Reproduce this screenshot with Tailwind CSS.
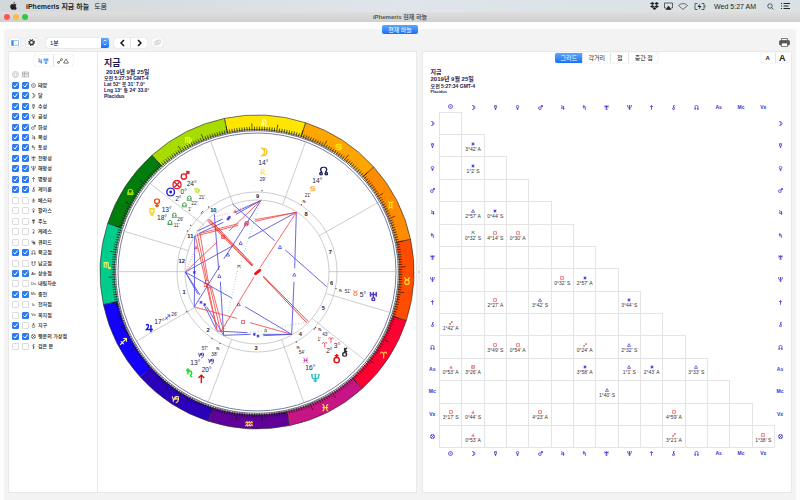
<!DOCTYPE html>
<html lang="ko">
<head>
    <meta charset="UTF-8">
    <meta name="viewport" content="width=device-width, initial-scale=1.0">
    <title>iPhemeris 현재 하늘</title>
    <script src="https://cdn.jsdelivr.net/npm/@tailwindcss/browser@4"></script>
</head>
<body class="flex min-h-screen flex-col bg-[#fdfdfd] font-['Liberation_Sans','Noto_Sans_CJK_KR',sans-serif] text-[6px] leading-none text-[#222]">

    <!-- Shared symbols, all drawn on a 20x20 box -->
    <svg class="hidden" aria-hidden="true">
        <defs>
            <symbol id="sun" viewBox="0 0 20 20"><circle cx="10" cy="10" r="8"/><circle cx="10" cy="10" r="1.5"/></symbol>
            <symbol id="moon" viewBox="0 0 20 20"><path d="M6 2c13 0 13 16 0 16 7-5 7-11 0-16z"/></symbol>
            <symbol id="mercury" viewBox="0 0 20 20"><circle cx="10" cy="8" r="4.5"/><path d="M5 1c1 3 9 3 10 0M10 12.500v7M6.500 16h7"/></symbol>
            <symbol id="venus" viewBox="0 0 20 20"><circle cx="10" cy="6.500" r="5"/><path d="M10 11.500v8M6 15.500h8"/></symbol>
            <symbol id="mars" viewBox="0 0 20 20"><circle cx="7.500" cy="12.500" r="5.500"/><path d="M11.500 8.500L18 2M12 2h6v6"/></symbol>
            <symbol id="jupiter" viewBox="0 0 20 20"><path d="M4 4c5-4 8 2 1 9h13M14 4v15"/></symbol>
            <symbol id="saturn" viewBox="0 0 20 20"><path d="M7 1v13M3 5h8M7 9c8-5 10 2 6 6-1 2 0 4 3 3"/></symbol>
            <symbol id="uranus" viewBox="0 0 20 20"><path d="M4 1v10M16 1v10M4 6h12M10 1v12"/><circle cx="10" cy="16" r="3"/></symbol>
            <symbol id="neptune" viewBox="0 0 20 20"><path d="M3 2v4c0 8 14 8 14 0V2M10 1v18M6 16h8M1 3h4M8 3h4M15 3h4"/></symbol>
            <symbol id="pluto" viewBox="0 0 20 20"><path d="M10 19V2M4 8l6-6 6 6"/></symbol>
            <symbol id="chiron" viewBox="0 0 20 20"><circle cx="10" cy="15" r="4"/><path d="M10 11V1M15 1l-5 5 5 4"/></symbol>
            <symbol id="node" viewBox="0 0 20 20"><path d="M6 13C1 5 5 2 10 2s9 3 4 11"/><circle cx="4.500" cy="15.500" r="2.500"/><circle cx="15.500" cy="15.500" r="2.500"/></symbol>
            <symbol id="snode" viewBox="0 0 20 20"><path d="M6 7c-5 8-1 11 4 11s9-3 4-11"/><circle cx="4.500" cy="4.500" r="2.500"/><circle cx="15.500" cy="4.500" r="2.500"/></symbol>
            <symbol id="earth" viewBox="0 0 20 20"><circle cx="10" cy="13" r="5.500"/><path d="M10 7.500V0M6 4h8"/></symbol>
            <symbol id="fortune" viewBox="0 0 20 20"><circle cx="10" cy="10" r="8.500"/><path d="M4 4l12 12M16 4L4 16"/></symbol>
            <symbol id="vesta" viewBox="0 0 20 20"><path d="M10 2v10M6 7h8M3 12h14M6 17h8"/></symbol>
            <symbol id="pallas" viewBox="0 0 20 20"><path d="M10 1l5 5-5 6-5-6zM10 12v7M6 15h8"/></symbol>
            <symbol id="juno" viewBox="0 0 20 20"><path d="M10 1v18M5 3l10 6M15 3L5 9M4 6h12M6 15h8"/></symbol>
            <symbol id="ceres" viewBox="0 0 20 20"><path d="M6 3c9-4 11 7 4 8v8M6 15h8"/></symbol>
            <symbol id="cupid" viewBox="0 0 20 20"><path d="M4 2v8h12M9 2v16M15 5v14M9 14h8"/></symbol>
            <symbol id="lilith" viewBox="0 0 20 20"><path d="M13 1C5 1 5 12 13 12 9 9 9 4 13 1zM10 12v8M7 16h7"/></symbol>

            <symbol id="aries" viewBox="0 0 20 20"><path d="M10 19V9C10 1 2 1 3 7M10 9c0-8 8-8 7-2"/></symbol>
            <symbol id="taurus" viewBox="0 0 20 20"><circle cx="10" cy="13" r="5.500"/><path d="M3 1c2 0 2 6 7 6s5-6 7-6"/></symbol>
            <symbol id="gemini" viewBox="0 0 20 20"><path d="M3 2c4 2 10 2 14 0M3 18c4-2 10-2 14 0M7 3v14M13 3v14"/></symbol>
            <symbol id="cancer" viewBox="0 0 20 20"><circle cx="6" cy="8" r="3"/><circle cx="14" cy="12" r="3"/><path d="M3 7c2-4 10-5 15-2M17 13c-2 4-10 5-15 2"/></symbol>
            <symbol id="leo" viewBox="0 0 20 20"><circle cx="5" cy="13" r="3"/><path d="M7 11C2 2 8 1 10 2c7 2 1 10 2 14 1 3 4 3 6 1"/></symbol>
            <symbol id="virgo" viewBox="0 0 20 20"><path d="M1 3c2-1 2 1 2 2v11M3 5c3-4 5-2 5 0v11M8 5c3-4 5-2 5 0v9c0 3 2 5 4 5M13 8c6-5 7 5-3 9"/></symbol>
            <symbol id="libra" viewBox="0 0 20 20"><path d="M2 17h16M2 13h5c-5-4-2-9 3-9s8 5 3 9h5"/></symbol>
            <symbol id="scorpio" viewBox="0 0 20 20"><path d="M1 3c2-1 2 1 2 2v11M3 5c3-4 5-2 5 0v11M8 5c3-4 5-2 5 0v10c0 3 2 3 5 2M16 14l3 3-3 3"/></symbol>
            <symbol id="sagittarius" viewBox="0 0 20 20"><path d="M2 18L18 2M10 2h8v8M4 9l7 7"/></symbol>
            <symbol id="capricorn" viewBox="0 0 20 20"><path d="M1 3c3 0 3 4 4 11L10 3v8"/><circle cx="14.500" cy="6" r="3.500"/><path d="M18 6c0 7-2 12-7 12"/></symbol>
            <symbol id="aquarius" viewBox="0 0 20 20"><path d="M1 9l4-4 2 4 4-4 2 4 4-4 2 4M1 16l4-4 2 4 4-4 2 4 4-4 2 4"/></symbol>
            <symbol id="pisces" viewBox="0 0 20 20"><path d="M3 1c6 5 6 13 0 18M17 1c-6 5-6 13 0 18M3 10h14"/></symbol>

            <symbol id="square" viewBox="0 0 20 20"><path d="M3 3h14v14H3z"/></symbol>
            <symbol id="trine" viewBox="0 0 20 20"><path d="M10 3l8 14H2z"/></symbol>
            <symbol id="sextile" viewBox="0 0 20 20"><path stroke-width="4" d="M10 2v16M3 6l14 8M17 6L3 14"/></symbol>
            <symbol id="opposition" viewBox="0 0 20 20"><circle cx="5" cy="15" r="3"/><circle cx="15" cy="5" r="3"/><path d="M7 13l6-6"/></symbol>
            <symbol id="semisquare" viewBox="0 0 20 20"><path d="M13 3L4 16h13M10 8c3 1 4 4 3 8"/></symbol>
            <symbol id="sesqui" viewBox="0 0 20 20"><path d="M3 3h14v14H3zM10 7v6M7 10h6"/></symbol>
            <symbol id="semisextile" viewBox="0 0 20 20"><path d="M2 4h16M2 17l8-13 8 13"/></symbol>
            <symbol id="quincunx" viewBox="0 0 20 20"><path d="M3 18h4V10c-3-9 9-9 6 0v8h4"/></symbol>
        </defs>
    </svg>

    <!-- System menu bar -->
    <header class="flex h-3 items-center bg-linear-to-r from-[#d3d8da] via-[#dfe5ea] to-[#d8e1e4] pr-[10px] pl-[10px] text-[7px]">
        <svg class="h-[8px] w-[7px]" viewBox="0 0 14 17" fill="#222"><path d="M10 0c0 2-1 4-3 4 0-2 1-4 3-4zM7 5c1 0 2-1 3.500-1 1 0 2.500.5 3 1.500-3 2-2 6 .5 7-.8 2-2 4-3.500 4-1 0-1.500-.6-3-.6s-2 .6-3 .6C2.500 16.500 0 13 0 9.500 0 6 2 4 4 4c1.300 0 2 1 3 1z"/></svg>
        <nav class="ml-[9px] flex gap-[5px]">
            <a href="#" class="font-bold">iPhemeris 지금 하늘</a>
            <a href="#">도움</a>
        </nav>
        <div class="ml-auto flex items-center">
            <svg class="h-[8px] w-[9px]" viewBox="0 0 18 16" fill="#222"><path d="M5 0l4 3-4 3-5-3zM13 0l5 3-5 3-4-3zM5 6l4 3-4 3-5-3zM13 6l5 3-5 3-4-3zM9 10l4 3-4 3-4-3z"/></svg>
            <svg class="ml-[5px] h-[8px] w-[9px]" viewBox="0 0 18 16" fill="none" stroke="#333" stroke-width="1.500"><path d="M4 12H1V2h16v10h-3"/><path d="M9 8l5 7H4z" fill="#222"/></svg>
            <svg class="ml-[5px] h-[7px] w-[10px]" viewBox="0 0 20 14" fill="none" stroke="#444" stroke-width="1.500"><path d="M1 5c5-5 13-5 18 0l-9 8z"/></svg>
            <svg class="ml-[6px] h-[7px] w-[12px]" viewBox="0 0 24 14" fill="none" stroke="#333" stroke-width="1.500"><path d="M7 1H2v12h5M15 1h5v12h-5M22 5v4"/><path d="M12 1L7 8h4l-1 5 5-7h-4z" fill="#222" stroke="none"/></svg>
            <time class="ml-[8px]">Wed 5:27 AM</time>
            <svg class="ml-[11px] h-[7px] w-[7px]" viewBox="0 0 14 14" fill="none" stroke="#333" stroke-width="1.500"><circle cx="6" cy="6" r="4.500"/><path d="M9 9l4 4"/></svg>
            <svg class="ml-[7px] h-[6px] w-[9px]" viewBox="0 0 18 12" stroke="#222" stroke-width="2"><path d="M0 1h2M5 1h13M0 6h2M5 6h10M0 11h2M5 11h13"/></svg>
        </div>
    </header>

    <!-- Title bar -->
    <div class="grid h-[10px] grid-cols-3 items-center bg-linear-to-b from-[#dedede] to-[#cfcfcf] px-1">
        <div class="flex gap-[3px]">
            <span class="size-[6px] rounded-full bg-[#fc5753]"></span>
            <span class="size-[6px] rounded-full bg-[#fdbc40]"></span>
            <span class="size-[6px] rounded-full bg-[#33c748]"></span>
        </div>
        <h1 class="text-center text-[6px] font-bold text-[#555]">iPhemeris 현재 하늘</h1>
    </div>

    <main class="mx-1 mt-[7px] flex grow flex-col rounded-t-[3px] bg-[#f3f3f3] px-[4px] pb-[7px]">
        <button class="z-10 -mt-1 flex h-[9px] w-[36px] items-center justify-center self-center rounded-[2px] bg-linear-to-b from-[#5da7fa] to-[#1a6dfb] text-[6px] text-white">현재 하늘</button>

        <!-- Toolbar -->
        <div class="flex h-[17px] items-center py-[3px] pr-[2px] pl-[1px]">
            <button class="flex h-[9px] w-[11px] items-center justify-center rounded-[2px] bg-white shadow-[0_0_1px_#aaa]" aria-label="사이드바">
                <svg class="h-[6px] w-[8px]" viewBox="0 0 16 12" fill="none" stroke="#7db4f3" stroke-width="1.500"><path d="M1 1h14v10H1z"/><path d="M1 1h4v10H1z" fill="#2f86f6"/></svg>
            </button>
            <button class="ml-[6px] flex h-[9px] w-[11px] items-center justify-center rounded-[2px] bg-white shadow-[0_0_1px_#aaa]" aria-label="설정">
                <svg class="size-[7px]" viewBox="0 0 20 20" fill="none" stroke="#333"><circle cx="10" cy="10" r="5.500" stroke-width="3.500"/><circle cx="10" cy="10" r="8.500" stroke-width="3" stroke-dasharray="3.340 3.340"/></svg>
            </button>
            <div class="relative ml-[9px] h-[10px] w-[63px]">
                <select aria-label="간격" class="block size-full appearance-none rounded-[2px] bg-white pl-[4px] text-[6px] shadow-[0_0_1px_#999]"><option>1분</option></select>
                <span class="pointer-events-none absolute inset-y-0 right-0 flex w-[8px] items-center justify-center rounded-r-[2px] bg-linear-to-b from-[#61a9fa] to-[#1a6dfb]">
                    <svg class="h-[7px] w-[4px]" viewBox="0 0 8 14" fill="none" stroke="#fff" stroke-width="1.500"><path d="M1 5l3-3 3 3M1 9l3 3 3-3"/></svg>
                </span>
            </div>
            <div class="ml-[5px] flex h-[10px] w-[33px] divide-x divide-[#e2e2e2] rounded-[2px] bg-white shadow-[0_0_1px_#aaa]">
                <button class="flex flex-1 items-center justify-center" aria-label="이전"><svg class="h-[8px] w-[5px]" viewBox="0 0 10 16" fill="none" stroke="#111" stroke-width="3"><path d="M8 2L2 8l6 6"/></svg></button>
                <button class="flex flex-1 items-center justify-center" aria-label="다음"><svg class="h-[8px] w-[5px]" viewBox="0 0 10 16" fill="none" stroke="#111" stroke-width="3"><path d="M2 2l6 6-6 6"/></svg></button>
            </div>
            <button class="ml-[5px] flex h-[9px] w-[11px] items-center justify-center rounded-[2px] bg-[#fafafa] shadow-[0_0_1px_#ccc]" aria-label="연결" disabled>
                <svg class="size-[7px]" viewBox="0 0 20 20" fill="none" stroke="#bbb" stroke-width="2"><rect x="1" y="7" width="13" height="9" rx="4.500" transform="rotate(-45 7 12)"/><rect x="6" y="4" width="13" height="9" rx="4.500" transform="rotate(-45 13 8)"/></svg>
            </button>
            <button class="ml-auto" aria-label="인쇄">
                <svg class="h-[9px] w-[11px]" viewBox="0 0 22 18" fill="none" stroke="#555" stroke-width="1.500"><path d="M5 5V1h12v4"/><rect x="1" y="5" width="20" height="9" rx="2" fill="#555"/><path d="M5 10h12v7H5z" fill="#fff"/></svg>
            </button>
        </div>

        <div class="flex grow">
            <!-- Object list -->
            <aside class="w-[90px] shrink-0 border border-[#e9e9e9] bg-white pt-[3px]">
                <div class="mx-auto flex h-[11px] w-[39px] divide-x divide-[#e2e2e2] rounded-[2px] text-[#222] shadow-[0_0_1px_#aaa]">
                    <button class="flex flex-1 items-center justify-center text-[#2f86f6]" aria-label="행성">
                        <svg class="size-[6px] fill-none stroke-current stroke-[3]"><use href="#jupiter"/></svg>
                        <svg class="size-[6px] fill-none stroke-current stroke-[3]"><use href="#uranus"/></svg>
                    </button>
                    <button class="flex flex-1 items-center justify-center" aria-label="각도">
                        <svg class="size-[6px] fill-none stroke-current stroke-2"><use href="#opposition"/></svg>
                        <svg class="size-[6px] fill-none stroke-current stroke-2"><use href="#trine"/></svg>
                    </button>
                </div>
                <div class="mt-[5px] ml-[3px] flex gap-[3px]">
                    <svg class="size-[7px]" viewBox="0 0 14 14" fill="none" stroke="#b5b5b5" stroke-width="1.500"><circle cx="7" cy="7" r="6"/><circle cx="7" cy="7" r="3"/></svg>
                    <svg class="size-[7px]" viewBox="0 0 14 14" fill="none" stroke="#aaa" stroke-width="1.500"><path d="M1 2h12v10H1zM1 5h12M1 8h12M5 2v10"/></svg>
                </div>
                <ul id="objects" class="mt-[2px] ml-[3px] grid h-[272px] auto-rows-fr text-[5px] font-medium text-[#222]"></ul>
            </aside>

            <!-- Wheel -->
            <section class="relative w-[319px] grow border-y border-r border-[#e9e9e9] bg-white">
                <div class="absolute top-[6px] left-[6px] text-[5px] leading-[6px] font-bold text-[#1d1a4f]">
                    <h2 class="text-[9px] leading-[11px]">지금</h2>
                    <p class="pl-[2px] text-[6px]">2019년 9월 25일</p>
                    <p>오전 5:27:34 GMT-4</p>
                    <p>Lat 52° 북 31' 7.0°</p>
                    <p>Lng 13° 동 24' 33.0°</p>
                    <p>Placidus</p>
                </div>
                <svg id="wheel" class="mx-auto mt-[62px] block aspect-square w-full max-w-[316px]" viewBox="-474 -474 948 948" fill="none"></svg>
            </section>

            <div class="flex w-[5px] shrink-0 items-center justify-center"><span class="size-[2px] rounded-full bg-[#ccc]"></span></div>

            <!-- Aspect grid -->
            <section class="flex w-[371px] grow flex-col border border-[#e9e9e9] bg-white pt-[1px]">
                <div class="grid grid-cols-[1fr_auto_1fr] px-[2px]">
                    <div class="col-start-2 flex h-[10px] divide-x divide-[#e2e2e2] rounded-[2px] shadow-[0_0_1px_#aaa]">
                        <button class="w-[28px] rounded-l-[2px] bg-linear-to-b from-[#5da7fa] to-[#1a6dfb] text-white">그리드</button>
                        <button class="w-[28px]">각거리</button>
                        <button class="w-[18px]">점</button>
                        <button class="w-[29px]">중간 점</button>
                    </div>
                    <div class="flex h-[10px] w-[28px] divide-x divide-[#e2e2e2] justify-self-end rounded-[2px] shadow-[0_0_1px_#aaa]">
                        <button class="flex-1 text-[6px] font-bold">A</button>
                        <button class="flex-1 text-[9px] font-bold">A</button>
                    </div>
                </div>
                <div class="mt-[5px] ml-[8px] text-[5px] leading-[6px] font-bold text-[#1d1a4f]">
                    <h2 class="text-[6px] leading-[8px]">지금</h2>
                    <p class="text-[6px] leading-[7px]">2019년 9월 25일</p>
                    <p>오전 5:27:34 GMT-4</p>
                    <p class="text-[4px]">Placidus</p>
                </div>
                <table id="aspects" class="mt-[7px] ml-[5px] h-[356px] w-[358px] table-fixed border-collapse text-center text-[5px] text-[#333]"></table>
            </section>
        </div>
    </main>

    <script>
        const use = (id, x, y, size, color, w = 2) =>
            `<use href="#${id}" x="${x - size / 2}" y="${y - size / 2}" width="${size}" height="${size}" stroke="${color}" stroke-width="${w}"/>`;

        // --- object list: [symbol, name, in wheel, in grid]
        const objects = [
            ['sun', '태양', 1, 1], ['moon', '달', 1, 1], ['mercury', '수성', 1, 1], ['venus', '금성', 1, 1],
            ['mars', '화성', 1, 1], ['jupiter', '목성', 1, 1], ['saturn', '토성', 1, 1], ['uranus', '천왕성', 1, 1],
            ['neptune', '해왕성', 1, 1], ['pluto', '명왕성', 1, 1], ['chiron', '케이론', 1, 1], ['vesta', '베스타', 0, 0],
            ['pallas', '팔라스', 0, 0], ['juno', '주노', 0, 0], ['ceres', '케레스', 0, 0], ['cupid', '큐피드', 0, 0],
            ['node', '북교점', 1, 1], ['snode', '남교점', 0, 0], ['As', '상승점', 1, 1], ['Ds', '내림차순', 0, 0],
            ['Mc', '중천', 1, 1], ['Ic', '천저점', 0, 0], ['Vx', '꼭지점', 0, 1], ['earth', '지구', 1, 0],
            ['fortune', '행운의 가상점', 1, 1], ['lilith', '검은 문', 0, 0],
        ];
        const isText = id => id.length === 2;
        const box = (on, label) => `
            <label class="grid size-[7px] place-items-center">
                <input type="checkbox" ${on ? 'checked' : ''} aria-label="${label}" class="peer col-start-1 row-start-1 size-[7px] appearance-none rounded-[1px] border border-[#dcdcdc] bg-white checked:border-[#2f7cf0] checked:bg-[#2f7cf0]">
                <svg class="pointer-events-none col-start-1 row-start-1 hidden size-[5px] peer-checked:block" viewBox="0 0 10 10" fill="none" stroke="#fff" stroke-width="2"><path d="M1 5l3 3 5-7"/></svg>
            </label>`;
        document.getElementById('objects').innerHTML = objects.map(([id, name, a, b]) => `
            <li class="flex items-center">
                <span class="flex gap-[3px]">${box(a, name + ' 차트')}${box(b, name + ' 그리드')}</span>
                <span class="ml-px flex w-[7px] justify-center">${isText(id)
                    ? `<span class="text-[4px]">${id}</span>`
                    : `<svg class="size-[5px] fill-none stroke-current stroke-2"><use href="#${id}"/></svg>`}</span>
                <span class="ml-px">${name}</span>
            </li>`).join('');

        // --- aspect grid
        const cols = ['sun', 'moon', 'mercury', 'venus', 'mars', 'jupiter', 'saturn', 'uranus', 'neptune', 'pluto', 'chiron', 'node', 'As', 'Mc', 'Vx'];
        const rows = [...cols.slice(1), 'fortune'];
        const found = {
            mercury: { moon: ['sextile', "3°42' A"] },
            venus: { moon: ['sextile', "1°2' S"] },
            jupiter: { moon: ['trine', "2°57' A"], mercury: ['sextile', "0°44' S"] },
            saturn: { moon: ['semisextile', "0°32' S"], mercury: ['square', "4°14' S"], venus: ['square', "0°30' A"] },
            neptune: { jupiter: ['square', "0°32' S"], saturn: ['sextile', "2°57' A"] },
            pluto: { mercury: ['square', "2°27' A"], mars: ['trine', "3°42' S"], neptune: ['sextile', "3°44' S"] },
            chiron: { sun: ['opposition', "1°42' A"] },
            node: { mercury: ['square', "3°49' S"], venus: ['square', "0°54' A"], saturn: ['opposition', "0°24' A"], neptune: ['trine', "2°32' S"] },
            As: { sun: ['semisquare', "0°53' A"], moon: ['sesqui', "3°26' A"], saturn: ['sextile', "3°58' A"], neptune: ['trine', "1°1' S"], pluto: ['sextile', "2°43' A"], node: ['trine', "3°33' S"] },
            Mc: { uranus: ['trine', "1°40' S"] },
            Vx: { sun: ['square', "3°17' S"], moon: ['semisquare', "0°44' S"], mars: ['square', "4°23' A"], chiron: ['square', "4°59' A"] },
            fortune: { moon: ['semisquare', "0°53' A"], chiron: ['opposition', "3°21' A"], Vx: ['square', "1°38' S"] },
        };
        const tone = {
            sextile: 'text-[#2a20e0]', trine: 'text-[#2a20e0]', semisextile: 'text-[#2c7a2c]',
            square: 'text-[#f03030]', opposition: 'text-[#f03030]', semisquare: 'text-[#f03030]', sesqui: 'text-[#f03030]',
        };
        const head = id => isText(id)
            ? `<span class="text-[5px] font-bold">${id}</span>`
            : `<svg class="mx-auto size-[5px] fill-none stroke-current stroke-[3]"><use href="#${id}"/></svg>`;
        const headRow = `<tr class="h-[10px] text-[#3a30d8]"><td class="w-[12px]"></td>${cols.map(c => `<th class="p-0">${head(c)}</th>`).join('')}<td class="w-[11px]"></td></tr>`;
        document.getElementById('aspects').innerHTML = headRow + rows.map((r, i) => `
            <tr class="h-[22px]">
                <th class="pr-[2px] text-[#3a30d8]">${head(r)}</th>
                ${cols.map((c, j) => {
                    if (j > i) return '<td></td>';
                    const a = (found[r] || {})[c];
                    return `<td class="border border-[#e4e4e4] p-0 leading-[5px] whitespace-nowrap">${a
                        ? `<svg class="mx-auto mt-[2px] mb-px size-[4px] fill-none stroke-current stroke-[3] ${tone[a[0]]}"><use href="#${a[0]}"/></svg>${a[1]}` : ''}</td>`;
                }).join('')}
                <th class="text-[#3a30d8]">${head(r)}</th>
            </tr>`).join('') + headRow;

        // --- wheel, three units per pixel, origin in the middle
        const pt = (r, deg) => {
            const t = deg * Math.PI / 180;
            return [(r * Math.cos(t)).toFixed(1), (-r * Math.sin(t)).toFixed(1)];
        };
        let s = '';

        // zodiac band: [sign, fill, glyph x, glyph y, glyph colour], from 12° anticlockwise
        const band = [
            ['gemini', '#ff8c00', 401, -201, '#ffe600'], ['cancer', '#ffa500', 245, -375, '#ffe600'],
            ['leo', '#ffe600', 23, -447, '#fffbc0'], ['virgo', '#a8dc00', -206, -395, '#e0ff20'],
            ['libra', '#007d0c', -380, -241, '#b0e800'], ['scorpio', '#00cc8c', -450, -20, '#e8f060'],
            ['sagittarius', '#1400ff', -401, 209, '#f4f0a0'], ['capricorn', '#2a00bb', -245, 382, '#f0e080'],
            ['aquarius', '#5f0099', -24, 455, '#f0d060'], ['pisces', '#c71585', 205, 407, '#ffd050'],
            ['aries', '#ff0033', 380, 249, '#ffc040'], ['taurus', '#ff4d00', 450, 27, '#ffe030'],
        ];
        band.forEach(([sign, fill, x, y, color], i) => {
            const a = 12 + i * 30, b = a + 30;
            s += `<path d="M${pt(471, a)}A471 471 0 0 0 ${pt(471, b)}L${pt(428, b)}A428 428 0 0 1 ${pt(428, a)}z" fill="${fill}" stroke="#333" stroke-width="2"/>`;
            s += use(sign, x, y, 24, color, 3);
        });
        let ticks = '';
        for (let d = 0; d < 360; d++) {
            ticks += `M${pt(424, d + 12)}L${pt(d % 10 ? 436 : 446, d + 12)}`;
        }
        s += `<path d="${ticks}" stroke="#111" stroke-width="2"/>
            <circle r="424" stroke="#333" stroke-width="2"/><circle r="417" stroke="#3c3c78" stroke-width="2"/>
            <circle r="240" stroke="#b4b4b4" stroke-width="2"/><circle r="216" stroke="#b4b4b4" stroke-width="2"/>`;

        // house cusps
        s += `<path stroke="#b4b4b4" stroke-width="2" d="M-140-395L-71-202M-323-267L-158-140M-405-124L-205-64M-417-1H-215M-363 208L-186 106M-148 393L-76 203M147-394L77-202M366-210L187-109M216-1H423M404 123L209 65M324 265L166 140M141 393L74 203"/>`;

        s += `<g transform="translate(-231 -261)" stroke-width="2.500">
            <path stroke="#4a48e0" d="M158 58L284 167M316 195L440 305M349 82L205 160M16 261L157 183L243 46M157 183L131 222M120 242L43 366M349 82L344 250M342 290L335 448M103 88L116 255M121 290L131 451M16 261L157 340M195 365L335 448M44 153L43 366M243 46L165 82M243 46L168 88M128 102L52 138M130 112L56 146M16 261L54 328M16 261L60 330M75 365L110 436M80 365L131 451M131 451L212 448M112 438L202 443M248 448H335M250 452L335 448"/>
            <path stroke="#f04848" d="M349 82L240 248M222 276L124 438M349 82L225 104M349 82L225 109M175 116L56 146M175 121L46 153M243 46L148 137M43 366L170 400M210 413L335 448M16 261L112 170M46 153L76 285M52 146L80 285M60 146L84 285M84 305L112 438M90 305L122 440M94 305L130 436M76 285L110 430"/>
            <path stroke="#e82020" d="M84 103L218 242M88 102L220 240M250 273L385 410M250 276L380 413M82 107L216 243"/>
            <path stroke="#f08080" stroke-dasharray="3 5" d="M16 261L75 128M103 96L150 84M180 72L243 46M43 366L80 375"/>
            <path stroke="#88a088" stroke-dasharray="2 6" d="M243 46L182 235M172 258L131 445M131 451L245 438M268 433L385 410"/>
        </g>`;
        [['trine', 69, -75, 'b'], ['trine', -49, -87, 'b'], ['trine', -87, -52, 'b'], ['trine', 112, 8, 'b'], ['trine', -113, 12, 'b'], ['trine', -55, 97, 'b'],
            ['sextile', -188, 1, 'b'], ['sextile', -87, -159, 'b'], ['sextile', -83, -164, 'b'], ['sextile', -168, 91, 'b'], ['sextile', -157, 98, 'b'],
            ['sextile', -8, 187, 'b'], ['sextile', 3, 192, 'b'], ['square', -33, -143, 'r'], ['square', -30, -147, 'r'], ['sesqui', -102, -105, 'r'],
            ['square', -150, 30, 'r'], ['square', -154, 39, 'r'], ['square', -145, 43, 'r'], ['square', -42, 150, 'r'],
            ['semisquare', -183, -74, 'r'], ['semisquare', -66, -183, 'r'], ['semisextile', -54, -16, 'g'], ['quincunx', 26, 175, 'g'],
        ].forEach(([id, x, y, c]) => s += use(id, x, y, id === 'sextile' ? 12 : 13, { b: '#2a20e0', r: '#e82030', g: '#1f7a2f' }[c], 3));
        s += `<path d="M-4 5L8-5" stroke="#f01818" stroke-width="9" stroke-linecap="round"/>`;

        const label = (x, y, t, size, extra = '') =>
            `<text x="${x}" y="${y + size * 0.36}" font-size="${size}" text-anchor="middle" fill="#1d1a3f" ${extra}>${t}</text>`;
        [[1, -219, 60], [2, -147, 174], [3, -3, 228], [4, 130, 185], [5, 199, 107], [6, 224, 34], [7, 220, -60], [8, 147, -174],
            [9, 2, -228], [10, -131, -186], [11, -200, -108], [12, -226, -34]].forEach(([n, x, y]) => s += label(x, y, n, 17, 'font-weight="bold"'));

        // planets: [symbol, colour, x, y, degree, x, y, sign, colour, x, y, minute, x, y, retrograde x, y]
        [
            ['mars', '#e0202a', -216, -290, '24°', -196, -264, 'virgo', '#a8dc00', -179, -244, "21'", -165, -224],
            ['fortune', '#e0202a', -240, -262, '0°', -220, -240, 'libra', '#108028', -203, -222, "22'", -188, -205],
            ['sun', '#2020d8', -259, -240, '2°', -236, -219, 'libra', '#108028', -218, -202, "1'", -202, -188],
            ['venus', '#f05010', -300, -207, '13°', -271, -186, 'libra', '#108028', -248, -171, "26'", -230, -157],
            ['mercury', '#f8d030', -315, -180, '18°', -285, -164, 'libra', '#108028', -261, -149, "11'", -241, -139],
            ['moon', '#f8c820', 21, -360, '14°', 19, -329, 'leo', '#f8d820', 18, -300, "29'", 17, -278],
            ['node', '#202058', 200, -303, '14°', 181, -275, 'cancer', '#ff9820', 167, -250, "21'", 152, -231, 142, -212],
            ['jupiter', '#1818e8', -324, 168, '17°', -293, 149, 'sagittarius', '#2a20e0', -269, 136, "26'", -248, 126],
            ['saturn', '#20e020', -203, 302, '13°', -185, 273, 'capricorn', '#3018b8', -168, 250, "57'", -157, 230],
            ['pluto', '#e01818', -167, 321, '20°', -151, 292, 'capricorn', '#3018b8', -138, 268, "38'", -128, 248, -117, 229],
            ['uranus', '#5038c0', 349, 73, '5°', 318, 68, 'taurus', '#ff6020', 295, 63, "51'", 272, 58, 251, 55],
            ['earth', '#e01010', 239, 260, '2°', 217, 235, 'aries', '#ff3050', 203, 218, "1'", 187, 202],
            ['chiron', '#303030', 263, 240, '3°', 240, 220, 'aries', '#ff3050', 222, 204, "43'", 205, 188, 189, 174],
            ['neptune', '#30c0c0', 175, 318, '16°', 160, 287, 'pisces', '#c82890', 146, 265, "54'", 134, 242, 124, 226],
        ].forEach(([p, pc, px, py, d, dx, dy, z, zc, zx, zy, m, mx, my, rx, ry]) => {
            s += use(p, px, py, 29, pc, 3) + label(dx, dy, d, 20) + use(z, zx, zy, 19, zc, 2.5) + label(mx, my, m, 14);
            if (rx) s += label(rx, ry, '℞', 12, 'font-family="DejaVu Sans"');
        });
        [[-167, -177], [-163, -181], [-145, -195], [-199, -140], [-209, -123], [15, -244], [133, -202], [-211, 119], [-135, 200], [-111, 214], [237, 50], [172, 171], [176, 167], [118, 210]]
            .forEach(([x, y]) => s += `<circle cx="${x}" cy="${y}" r="2" fill="#444"/>`);
        document.getElementById('wheel').innerHTML = s;
    </script>
</body>
</html>
